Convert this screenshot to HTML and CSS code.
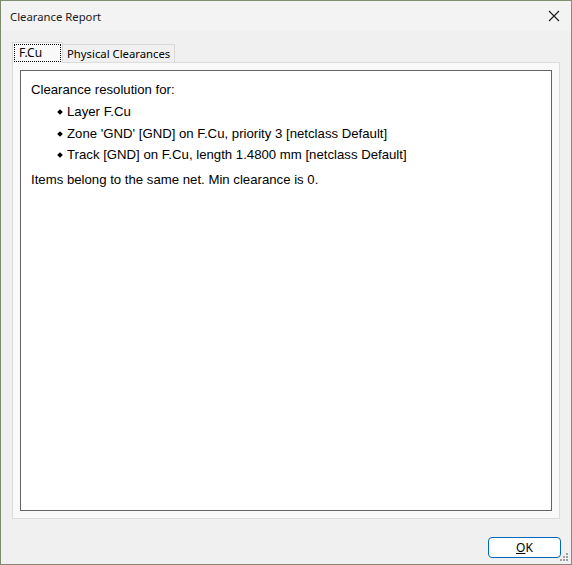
FILE: index.html
```html
<!DOCTYPE html>
<html>
<head>
<meta charset="utf-8">
<link rel="stylesheet" href="styles.css">
</head>
<body>
<div class="window">
  <div class="titlebar">
    <span class="title">Clearance Report</span>
    <svg class="close" width="12" height="12" viewBox="0 0 12 12"><path d="M1 1 L11 11 M11 1 L1 11" stroke="#1a1a1a" stroke-width="1.1" fill="none"/></svg>
  </div>
  <div class="body">
    <div class="tabs">
      <div class="tab active"><span class="focus">F.Cu</span></div>
      <div class="tab">Physical Clearances</div>
    </div>
    <div class="panel">
      <div class="report">
        <p class="line">Clearance resolution for:</p>
        <ul class="items">
          <li>Layer F.Cu</li>
          <li>Zone 'GND' [GND] on F.Cu, priority 3 [netclass Default]</li>
          <li>Track [GND] on F.Cu, length 1.4800 mm [netclass Default]</li>
        </ul>
        <p class="line">Items belong to the same net. Min clearance is 0.</p>
      </div>
    </div>
    <div class="footer">
      <button class="ok"><u>O</u>K</button>
    </div>
  </div>
  <svg class="grip" width="9" height="9" viewBox="0 0 9 9"><g fill="#a0a0a0"><rect x="6" y="0" width="2" height="2"/><rect x="3" y="3" width="2" height="2"/><rect x="6" y="3" width="2" height="2"/><rect x="0" y="6" width="2" height="2"/><rect x="3" y="6" width="2" height="2"/><rect x="6" y="6" width="2" height="2"/></g></svg>
</div>
</body>
</html>
```
FILE: styles.css
```css
html, body { margin: 0; padding: 0; }
body { width: 572px; height: 565px; overflow: hidden; background: #f0f0f0; }
.window {
  position: relative;
  width: 572px; height: 565px; box-sizing: border-box;
  border-left: 1px solid #7d8a6c; border-right: 1px solid #8f8778;
  border-top: 1px solid #7f8f6f; border-bottom: 1px solid #8c8270;
  background: #f0f0f0;
  display: flex; flex-direction: column;
  font-family: "Noto Sans", "Open Sans", sans-serif;
}
.titlebar {
  height: 30px; background: #f3f3f3;
  display: flex; align-items: center; justify-content: space-between;
  padding: 0 11px 0 9px;
}
.title { font-size: 11.3px; color: #1a1a1a; }
.close { display: block; margin-top: 0; }
.body { flex: 1; display: flex; flex-direction: column; padding: 11px 11px 0 11px; }
.tabs { display: flex; align-items: flex-end; height: 20px; position: relative; z-index: 1; }
.tab {
  height: 18px; box-sizing: border-box; padding: 0 4px;
  font-size: 11.3px; line-height: 16px; color: #000;
  background: #f0f0f0; border: 1px solid #d9d9d9; border-bottom: none; border-left: none;
  display: flex; align-items: center;
}
.tab.active {
  height: 21px; margin-bottom: -1px; background: #f9f9f9;
  border: 1px solid #d9d9d9; border-bottom: none; padding: 0 2px; width: 51px;
}
.focus { outline: 1px dotted #000; outline-offset: 0; padding: 0 4px; line-height: 16px; display: block; width: 37px; font-size: 12px; }
.panel {
  height: 457px; box-sizing: border-box; background: #f9f9f9;
  border: 1px solid #dcdcdc; padding: 7px;
}
.report {
  height: 100%; box-sizing: border-box; background: #fff;
  border: 1px solid #646464; padding: 9px 10px;
  font-family: "Liberation Sans", Arial, sans-serif; font-size: 13.2px; color: #000;
}
.line { margin: 0; line-height: 20px; }
.items { list-style: none; margin: 1px 0 4px 0; padding: 0 0 0 27px; }
.items li { line-height: 21.7px; position: relative; padding-left: 9px; }
.items li::before {
  content: ""; position: absolute; left: 0; top: 9px; width: 4px; height: 4px;
  background: #000; transform: rotate(45deg);
}
.footer { flex: 1; display: flex; justify-content: flex-end; align-items: flex-start; padding-top: 18px; }
.ok {
  width: 73px; height: 21px; box-sizing: border-box; margin-right: -1px;
  background: #fff; border: 1.5px solid #0067c0; border-radius: 4px;
  font-family: "Noto Sans", "Open Sans", sans-serif; font-size: 12px; color: #000; padding: 0;
}
.grip { position: absolute; right: 2px; bottom: 2px; }
```
